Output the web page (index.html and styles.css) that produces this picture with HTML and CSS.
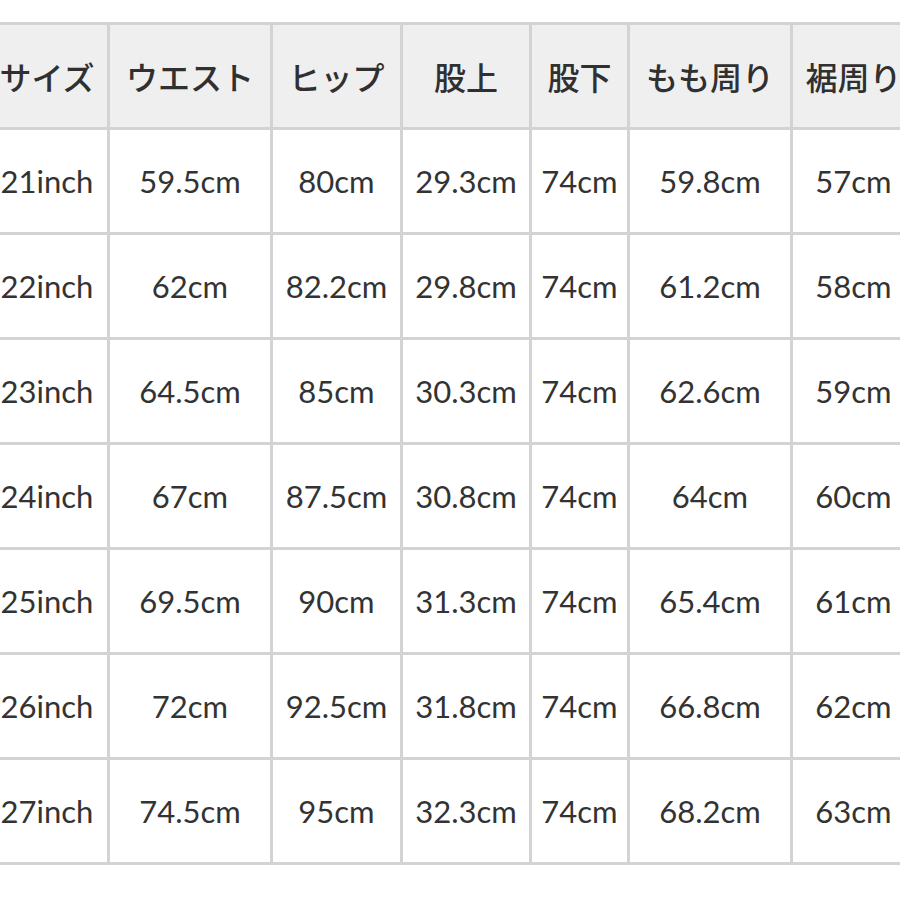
FILE: index.html
```html
<!DOCTYPE html>
<html lang="ja">
<head>
<meta charset="utf-8">
<title>サイズ表</title>
<link rel="stylesheet" href="styles.css">
</head>
<body>
<div class="frame">
  <div class="size-table">
    <div class="cell head">サイズ</div>
    <div class="cell head">ウエスト</div>
    <div class="cell head">ヒップ</div>
    <div class="cell head">股上</div>
    <div class="cell head">股下</div>
    <div class="cell head">もも周り</div>
    <div class="cell head">裾周り</div>

    <div class="cell">21inch</div><div class="cell">59.5cm</div><div class="cell">80cm</div><div class="cell">29.3cm</div><div class="cell">74cm</div><div class="cell">59.8cm</div><div class="cell">57cm</div>
    <div class="cell">22inch</div><div class="cell">62cm</div><div class="cell">82.2cm</div><div class="cell">29.8cm</div><div class="cell">74cm</div><div class="cell">61.2cm</div><div class="cell">58cm</div>
    <div class="cell">23inch</div><div class="cell">64.5cm</div><div class="cell">85cm</div><div class="cell">30.3cm</div><div class="cell">74cm</div><div class="cell">62.6cm</div><div class="cell">59cm</div>
    <div class="cell">24inch</div><div class="cell">67cm</div><div class="cell">87.5cm</div><div class="cell">30.8cm</div><div class="cell">74cm</div><div class="cell">64cm</div><div class="cell">60cm</div>
    <div class="cell">25inch</div><div class="cell">69.5cm</div><div class="cell">90cm</div><div class="cell">31.3cm</div><div class="cell">74cm</div><div class="cell">65.4cm</div><div class="cell">61cm</div>
    <div class="cell">26inch</div><div class="cell">72cm</div><div class="cell">92.5cm</div><div class="cell">31.8cm</div><div class="cell">74cm</div><div class="cell">66.8cm</div><div class="cell">62cm</div>
    <div class="cell">27inch</div><div class="cell">74.5cm</div><div class="cell">95cm</div><div class="cell">32.3cm</div><div class="cell">74cm</div><div class="cell">68.2cm</div><div class="cell">63cm</div>
  </div>
</div>
</body>
</html>
```

FILE: styles.css
```css
html, body {
  margin: 0;
  padding: 0;
  background: #ffffff;
}

body {
  overflow: hidden;
  font-family: "Lato", "Noto Sans CJK JP", sans-serif;
  color: #333333;
}

.frame {
  width: 900px;
  height: 900px;
  overflow: hidden;
  padding-top: 22px;
  box-sizing: border-box;
}

.size-table {
  display: grid;
  grid-template-columns: 120px 160px 127px 126px 95px 160px 121px;
  grid-auto-rows: 102px;
  gap: 3px;
  padding: 3px;
  width: max-content;
  margin-left: -16px;
  background: #d3d3d3;
}

.cell {
  display: flex;
  align-items: center;
  justify-content: center;
  background: #ffffff;
  font-size: 31px;
  white-space: nowrap;
}

.head {
  background: #efefef;
  font-family: "Noto Sans CJK JP", sans-serif;
  font-size: 32px;
  font-weight: 500;
  color: #303030;
}
```
